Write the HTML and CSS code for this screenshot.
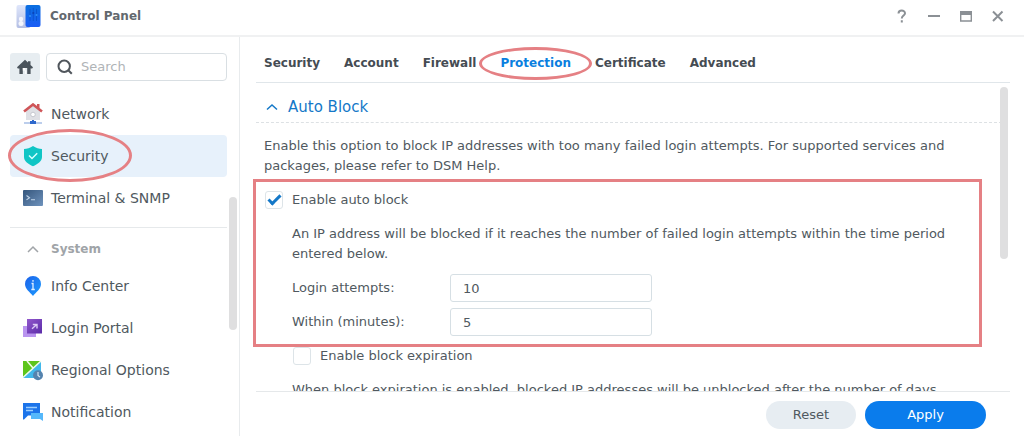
FILE: index.html
```html
<!DOCTYPE html>
<html lang="en">
<head>
<meta charset="utf-8">
<title>Control Panel</title>
<link rel="stylesheet" href="styles.css">
</head>
<body>
<div class="window">
  <header class="titlebar">
    <svg class="app-icon" viewBox="0 0 24 24" aria-hidden="true">
      <defs>
        <linearGradient id="panelBlue" x1="0" y1="0" x2="0" y2="1"><stop offset="0" stop-color="#0a6fe0"/><stop offset="1" stop-color="#1a5cf5"/></linearGradient>
        <linearGradient id="panelGrey" x1="0" y1="0" x2="0" y2="1"><stop offset="0" stop-color="#dfe6fb"/><stop offset="1" stop-color="#b4bfe4"/></linearGradient>
      </defs>
      <rect x="0" y="1" width="14" height="23" rx="2" fill="url(#panelGrey)"/>
      <rect x="9" y="1" width="15" height="22" rx="2" fill="url(#panelBlue)"/>
      <circle cx="4.500" cy="15" r="2.200" fill="#f4f6fd"/><circle cx="4.500" cy="19.500" r="2.500" fill="#f4f6fd"/>
      <path d="M13.500 5v12M16.800 4v13M20 5v12" stroke="#0a56d0" stroke-width="1"/>
      <circle cx="13.500" cy="12" r="1.100" fill="#2f8ff5"/><circle cx="16.800" cy="9" r="1.100" fill="#0b45b8"/><circle cx="20" cy="11" r="1.100" fill="#2f8ff5"/>
    </svg>
    <h1 class="title">Control Panel</h1>
    <div class="window-controls">
      <button class="window-button" type="button" aria-label="Help"><svg viewBox="0 0 16 16"><path d="M4.500 5.500C4.500 1.500 11 1.700 11 5.300C11 7.600 7.800 7.600 7.800 10.500M7.800 12.200v2.200"/></svg></button>
      <button class="window-button" type="button" aria-label="Minimize"><svg viewBox="0 0 16 16"><path d="M2 8h12"/></svg></button>
      <button class="window-button" type="button" aria-label="Maximize"><svg viewBox="0 0 16 16"><path d="M2.700 3.700h10.600v9.300H2.700z" stroke-width="1.400"/><path d="M2 5h12" stroke-width="4"/></svg></button>
      <button class="window-button" type="button" aria-label="Close"><svg viewBox="0 0 16 16"><path d="M3 3.500l9.500 9.500M12.500 3.500L3 13"/></svg></button>
    </div>
  </header>
  <div class="body">
    <aside class="sidebar">
      <div class="sidebar-tools">
        <button class="home-button" type="button" aria-label="Home"><svg viewBox="0 0 16 16"><path fill-rule="evenodd" d="M8 .800L11 3.600V2.200h2.500v3.700L16 8.300l-.8 1.200H13.600V15H2.400V9.500H.8L0 8.300zM5.800 9v6h4.400V9z"/><path d="M5.800 9h2.400v2.500h1V15h-1v-3.500H5.800z" fill="#fff"/></svg></button>
        <label class="search">
          <svg viewBox="0 0 16 16" aria-hidden="true"><circle cx="7.200" cy="7.200" r="5.700"/><path d="M11.300 11.300l3.500 3.500"/></svg>
          <input class="search-input" type="text" placeholder="Search" aria-label="Search">
        </label>
      </div>
      <nav class="nav">
        <a class="nav-item" href="#network">
          <svg viewBox="0 0 20 22" aria-hidden="true"><path d="M3 8l7-6 7 6v9H3z" fill="#dfe0e5"/><path d="M1 8.600L10 1.500l9 7.100" fill="none" stroke="#cf5558" stroke-width="2.600"/><path d="M14 1h2.500v4H14z" fill="#cf5558"/><circle cx="10" cy="11.500" r="2.300" fill="#fff" stroke="#c6c8d0"/><path d="M1 20h18" stroke="#8fade0" stroke-width="1.200"/><path d="M9 17h2v1h2v3H7v-3h2z" fill="#2e68cc"/></svg>
          <span>Network</span></a>
        <a class="nav-item selected" href="#security" aria-current="page">
          <svg viewBox="0 0 20 22" aria-hidden="true"><path d="M10 1c3 2 6 2.900 9 3v8c0 4-4.500 7.500-9 9.200C5.500 19.500 1 16 1 12V4c3-.1 6-1 9-3z" fill="#10c5c5"/><path d="M6 10.500l3 3 5.200-5.200" fill="none" stroke="#d8ffff" stroke-width="1.500"/></svg>
          <span>Security</span><i class="mark mark-nav"></i></a>
        <a class="nav-item" href="#terminal">
          <svg viewBox="0 0 20 22" aria-hidden="true"><defs><linearGradient id="term" x1="0" y1="0" x2="1" y2="1"><stop offset="0" stop-color="#35567c"/><stop offset="1" stop-color="#6f93bd"/></linearGradient></defs><rect x="0" y="3" width="20" height="16" rx="1" fill="url(#term)"/><path d="M3.500 8.500l3 2.200-3 2.200M8 12.800h4" fill="none" stroke="#c3d6ea" stroke-width="1.100"/></svg>
          <span>Terminal &amp; SNMP</span></a>
        <hr class="divider">
        <button class="group" type="button" aria-expanded="true"><svg viewBox="0 0 12 12" aria-hidden="true"><path d="M1 9l5-5 5 5"/></svg><span>System</span></button>
        <a class="nav-item" href="#info">
          <svg viewBox="0 0 20 22" aria-hidden="true"><defs><linearGradient id="info" x1="0" y1="0" x2="1" y2="1"><stop offset="0" stop-color="#1c62ea"/><stop offset="1" stop-color="#1c9cff"/></linearGradient></defs><path d="M10 1a8 8 0 0 1 8 8c0 5-5 8-8 12C7 17 2 14 2 9a8 8 0 0 1 8-8z" fill="url(#info)"/><path d="M10 5v1.800M8.500 8.500H10v6M8.300 14.500h3.500" fill="none" stroke="#dff0ff" stroke-width="1.300"/></svg>
          <span>Info Center</span></a>
        <a class="nav-item" href="#portal">
          <svg viewBox="0 0 20 22" aria-hidden="true"><defs><linearGradient id="portal" x1="0" y1="0" x2="1" y2="1"><stop offset="0" stop-color="#9258cc"/><stop offset="1" stop-color="#5a2ba8"/></linearGradient></defs><rect x="0" y="9" width="13" height="11" fill="#b994ef"/><rect x="4" y="2" width="15" height="14.500" fill="url(#portal)"/><path d="M9 11.800l4.500-4M9.800 7.500h4.200v4" fill="none" stroke="#dccbf5" stroke-width="1.400"/></svg>
          <span>Login Portal</span></a>
        <a class="nav-item" href="#regional">
          <svg viewBox="0 0 20 22" aria-hidden="true"><rect x="0" y="2" width="18" height="17" fill="#42b8eb"/><path d="M0 2h18L0 18z" fill="#5dc51b"/><path d="M18 2L0 18.500M4 2l6 7" fill="none" stroke="#eefbe8" stroke-width="1.600"/><circle cx="15" cy="16.300" r="5" fill="#5583ae"/><path d="M15 13v3.500l2 1.700" fill="none" stroke="#dcecf8" stroke-width="1.100"/></svg>
          <span>Regional Options</span></a>
        <a class="nav-item" href="#notification">
          <svg viewBox="0 0 20 22" aria-hidden="true"><path d="M0 2h17v12.500H5L1 18.500H0z" fill="#1c74ea"/><path d="M8 12h12v8l-3-2H8z" fill="#55b8fb"/><path d="M3 6.500h11M3 9.500h7" stroke="#9ccfff" stroke-width="1.300"/></svg>
          <span>Notification</span></a>
      </nav>
      <i class="scroll-thumb nav-thumb"></i>
    </aside>
    <main class="main">
      <nav class="tabs">
        <a class="tab" href="#tab-security">Security</a>
        <a class="tab" href="#tab-account">Account</a>
        <a class="tab" href="#tab-firewall">Firewall</a>
        <a class="tab active" href="#tab-protection" aria-current="page">Protection<i class="mark mark-tab"></i></a>
        <a class="tab" href="#tab-certificate">Certificate</a>
        <a class="tab" href="#tab-advanced">Advanced</a>
      </nav>
      <div class="content">
        <h2 class="section-title"><svg viewBox="0 0 12 12" aria-hidden="true"><path d="M1 8.500l5-4.500 5 4.500"/></svg>Auto Block</h2>
        <p class="text intro">Enable this option to block IP addresses with too many failed login attempts. For supported services and packages, please refer to DSM Help.</p>
        <section class="settings">
          <i class="mark mark-box"></i>
          <label class="check"><input class="checkbox" type="checkbox" checked><span>Enable auto block</span></label>
          <div class="details">
            <p class="text">An IP address will be blocked if it reaches the number of failed login attempts within the time period entered below.</p>
            <div class="fields">
              <label for="attempts">Login attempts:</label><input class="field" id="attempts" type="text" value="10">
              <label for="minutes">Within (minutes):</label><input class="field" id="minutes" type="text" value="5">
            </div>
          </div>
        </section>
        <div class="details">
          <label class="check nested"><input class="checkbox" type="checkbox"><span>Enable block expiration</span></label>
          <p class="text after">When block expiration is enabled, blocked IP addresses will be unblocked after the number of days</p>
        </div>
        <i class="scroll-thumb content-thumb"></i>
      </div>
      <footer class="footer">
        <button class="button" type="button">Reset</button>
        <button class="button primary" type="button">Apply</button>
      </footer>
    </main>
  </div>
</div>
</body>
</html>
```
FILE: styles.css
```css
* { box-sizing: border-box; }
body {
  margin: 0;
  background: #fff;
  color: #505960;
  font: 13px/20px "DejaVu Sans", Verdana, sans-serif;
}
button, input { font: inherit; color: inherit; }
button { padding: 0; border: 0; background: none; }
a { color: inherit; text-decoration: none; }
svg { flex: none; fill: none; }
.window { display: flex; flex-direction: column; height: 100vh; overflow: hidden; }

.titlebar {
  display: flex;
  align-items: center;
  flex: none;
  height: 37px;
  padding: 0 18px 3px 16px;
  border-bottom: 2px solid #f0f1f2;
}
.app-icon { width: 25px; height: 24px; }
.title { margin: 0 auto 0 9px; font-size: 12px; font-weight: bold; color: #62686e; }
.window-controls { display: flex; gap: 16px; }
.window-button { display: flex; width: 16px; height: 16px; }
.window-button svg { width: 16px; height: 16px; stroke: #8b9095; stroke-width: 2; }

.body { display: flex; flex: 1; min-height: 0; }
.sidebar {
  position: relative;
  flex: none;
  width: 240px;
  padding: 16px 12px 0 10px;
  border-right: 1px solid #e8ebed;
  overflow: hidden;
}
.sidebar-tools { display: flex; gap: 6px; margin-bottom: 12px; }
.home-button {
  display: flex;
  align-items: center;
  justify-content: center;
  width: 30px;
  height: 28px;
  border-radius: 3px;
  background: #e7edf1;
}
.home-button svg { width: 16px; height: 16px; fill: #4b545c; }
.search {
  display: flex;
  align-items: center;
  flex: 1;
  min-width: 0;
  gap: 8px;
  height: 28px;
  padding: 0 10px;
  border: 1px solid #d9dfe3;
  border-radius: 4px;
}
.search svg { width: 16px; height: 16px; stroke: #50565c; stroke-width: 2; }
.search-input { flex: 1; min-width: 0; padding: 0; border: 0; outline: 0; background: none; }
.search-input::placeholder { color: #b0b4b7; opacity: 1; }

.nav-item {
  position: relative;
  display: flex;
  align-items: center;
  gap: 8px;
  height: 42px;
  padding-left: 13px;
  border-radius: 4px;
  font-size: 14px;
}
.nav-item svg { width: 20px; height: 22px; }
.nav-item.selected { background: #e7f1fb; }
.divider { margin: 8px 0 0; border: 0; border-top: 1px solid #e6e9eb; }
.group {
  display: flex;
  align-items: center;
  gap: 12px;
  width: 100%;
  height: 37px;
  padding: 4px 0 0 17px;
  color: #a0a4a8;
  font-size: 12px;
  font-weight: bold;
}
.group svg { width: 12px; height: 12px; stroke: #a0a4a8; stroke-width: 1.500; }
.scroll-thumb { position: absolute; width: 8px; border-radius: 4px; background: #dfdfe0; }
.nav-thumb { top: 160px; right: 2px; height: 133px; }

.main { display: flex; flex-direction: column; flex: 1; min-width: 0; padding: 0 14px 0 16px; }
.tabs {
  display: flex;
  align-items: center;
  flex: none;
  gap: 24px;
  height: 46px;
  padding: 6px 8px 0;
  border-bottom: 1px solid #e0e6ea;
  color: #454c53;
  font-size: 12px;
  font-weight: bold;
}
.tab { position: relative; }
.tab.active { color: #0a7fe0; }

.content {
  position: relative;
  flex: 1;
  min-height: 0;
  margin-left: -8px;
  padding-left: 8px;
  overflow: hidden;
}
.section-title {
  display: flex;
  align-items: center;
  gap: 10px;
  height: 40px;
  margin: 0 8px 0 0;
  padding: 9px 0 0 10px;
  border-bottom: 1px dashed #dde1e4;
  color: #1478c8;
  font-size: 15px;
  font-weight: normal;
}
.section-title svg { width: 12px; height: 12px; stroke: #1478c8; stroke-width: 1.500; }
.text { margin: 0; }
.intro { padding: 13px 44px 14px 8px; }
.settings { position: relative; padding-bottom: 10px; }
.check { display: flex; align-items: center; gap: 9px; height: 20px; }
.settings > .check { margin-left: 9px; }
.nested { margin-left: 1px; }
.checkbox {
  appearance: none;
  flex: none;
  width: 18px;
  height: 18px;
  margin: 0;
  border: 1px solid #dde4e8;
  border-radius: 3px;
  background: #fff;
}
.checkbox:checked::before {
  content: "";
  display: block;
  box-sizing: border-box;
  width: 13px;
  height: 7px;
  margin: 3px 2px;
  border: solid #1478c8;
  border-width: 0 0 3px 3px;
  transform: rotate(-45deg);
}
.details { padding: 0 44px 0 36px; }
.settings .text { padding: 14px 0 10px; }
.fields { display: grid; grid-template-columns: 150px 202px; gap: 6px 8px; align-items: center; }
.field {
  width: 100%;
  height: 28px;
  padding: 0 12px;
  border: 1px solid #d6dfe4;
  border-radius: 3px;
  background: #fff;
}
.after { padding-top: 14px; }
.content-thumb { top: 4px; right: 2px; height: 172px; }

.mark { position: absolute; border: 3px solid #e58084; pointer-events: none; }
.mark-nav { top: -6px; left: -2px; width: 124px; height: 53px; border-radius: 50%; }
.mark-tab { top: -6px; left: -21px; right: -21px; height: 33px; border-radius: 50%; }
.mark-box { top: -11px; right: 28px; bottom: -1px; left: -3px; }

.footer {
  display: flex;
  justify-content: flex-end;
  flex: none;
  gap: 9px;
  padding: 9px 24px 7px 0;
  border-top: 1px solid #e5e8ea;
}
.button {
  width: 90px;
  height: 28px;
  border-radius: 14px;
  background: #e7edf2;
}
.button.primary { width: 121px; background: #0a7cec; color: #fff; }
```
